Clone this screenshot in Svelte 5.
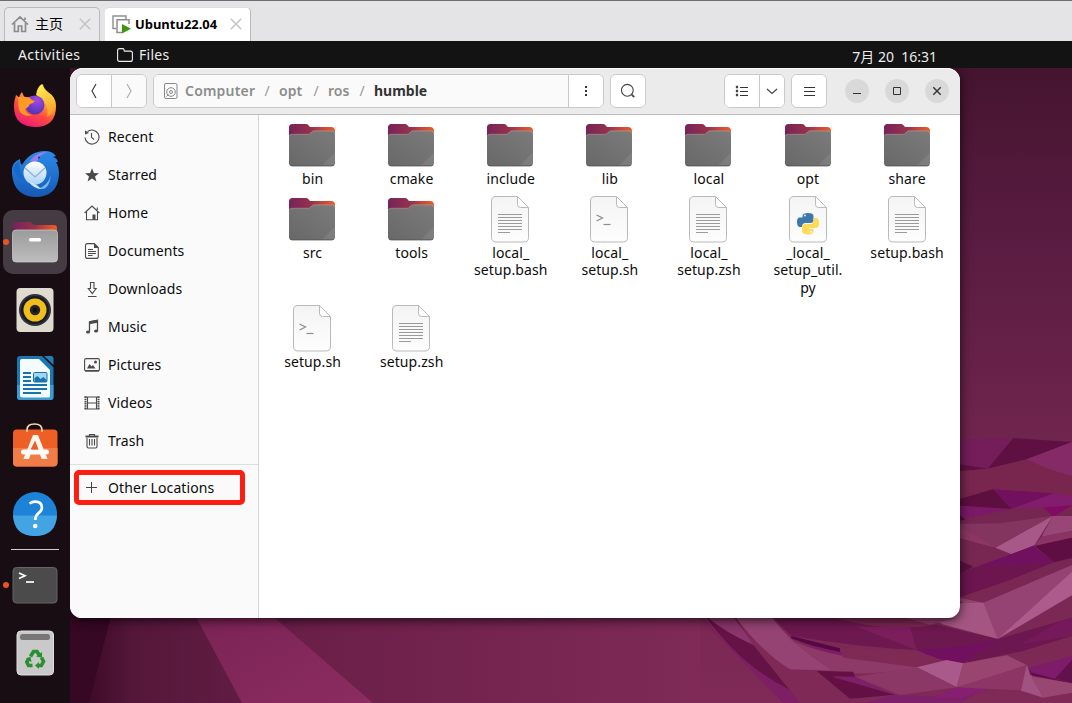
<script lang="ts">
  const places = ['Recent', 'Starred', 'Home', 'Documents', 'Downloads', 'Music', 'Pictures', 'Videos', 'Trash'];
  const files: { kind: string; lines: string[] }[] = [
    { kind: 'folder', lines: ['bin'] },
    { kind: 'folder', lines: ['cmake'] },
    { kind: 'folder', lines: ['include'] },
    { kind: 'folder', lines: ['lib'] },
    { kind: 'folder', lines: ['local'] },
    { kind: 'folder', lines: ['opt'] },
    { kind: 'folder', lines: ['share'] },
    { kind: 'folder', lines: ['src'] },
    { kind: 'folder', lines: ['tools'] },
    { kind: 'text', lines: ['local_', 'setup.bash'] },
    { kind: 'shell', lines: ['local_', 'setup.sh'] },
    { kind: 'text', lines: ['local_', 'setup.zsh'] },
    { kind: 'python', lines: ['_local_', 'setup_util.', 'py'] },
    { kind: 'text', lines: ['setup.bash'] },
    { kind: 'shell', lines: ['setup.sh'] },
    { kind: 'text', lines: ['setup.zsh'] },
  ];
</script>

<svg width="0" height="0" class="defs" aria-hidden="true">
  <defs>
    <linearGradient id="fback" x1="0" y1="0" x2="1" y2="0"><stop offset="0" stop-color="#76235a" /><stop offset=".5" stop-color="#98324a" /><stop offset=".75" stop-color="#c9483a" /><stop offset="1" stop-color="#ef5a26" /></linearGradient>
    <linearGradient id="ffront" x1="0" y1="1" x2="1" y2="0"><stop offset="0" stop-color="#686868" /><stop offset="1" stop-color="#7b7b7b" /></linearGradient>
    <linearGradient id="paper" x1="0" y1="0" x2="0" y2="1"><stop offset="0" stop-color="#f4f4f4" /><stop offset="1" stop-color="#fdfdfd" /></linearGradient>
    <linearGradient id="silver" x1="0" y1="0" x2="0" y2="1"><stop offset="0" stop-color="#9b9b9b" /><stop offset="1" stop-color="#bdbdbd" /></linearGradient>
    <linearGradient id="fox" x1=".8" y1="0" x2=".3" y2="1"><stop offset="0" stop-color="#fff04a" /><stop offset=".35" stop-color="#ffae2b" /><stop offset=".65" stop-color="#ff4b3e" /><stop offset="1" stop-color="#ec1a79" /></linearGradient>
    <linearGradient id="foxtail" x1=".3" y1="0" x2=".6" y2="1"><stop offset="0" stop-color="#fff250" /><stop offset="1" stop-color="#ff9a2d" /></linearGradient>
    <radialGradient id="globe" cx=".6" cy=".25" r=".8"><stop offset="0" stop-color="#a24be0" /><stop offset="1" stop-color="#4a32b8" /></radialGradient>
    <linearGradient id="bird" x1="0" y1="0" x2="0" y2="1"><stop offset="0" stop-color="#2c8bea" /><stop offset="1" stop-color="#1559b5" /></linearGradient>
    <linearGradient id="mail" x1="0" y1="0" x2="0" y2="1"><stop offset="0" stop-color="#fff" /><stop offset="1" stop-color="#a9d3f8" /></linearGradient>
  </defs>
</svg>

<div class="screen">
  <header class="tabs">
    <div class="tab idle">
      <svg width="18" height="18" viewBox="0 0 18 18" fill="none" stroke="#8b8b8b" stroke-width="1.7"><path d="M1 9.500 9 2l8 7.500M3.500 8v8.500h3.800V11h3.400v5.500h3.800V8M14 5V2.500" /></svg>
      <span class="home">主页</span>
      <svg class="x" width="12" height="12" viewBox="0 0 12 12" stroke="#c3c3c3" stroke-width="1.5"><path d="M.8.8l10.400 10.400M11.200.8.8 11.200" /></svg>
    </div>
    <div class="tab current">
      <svg width="20" height="19" viewBox="0 0 20 19"><path d="M4 13.500H1V1h13v3" fill="none" stroke="#8e8e8e" stroke-width="1.4" /><path d="M10 17.500H5V4.700h12V9" fill="none" stroke="#8e8e8e" stroke-width="1.5" /><path d="M10 9l9 4.700-9 4.800z" fill="#3f960e" /></svg>
      <b>Ubuntu22.04</b>
      <svg class="x" width="12" height="12" viewBox="0 0 12 12" stroke="#c3c3c3" stroke-width="1.5"><path d="M.8.8l10.400 10.400M11.200.8.8 11.200" /></svg>
    </div>
  </header>

  <div class="topbar">
    <span class="act">Activities</span>
    <svg width="16" height="14" viewBox="0 0 16 14" fill="none" stroke="#eee" stroke-width="1.1"><path d="M.6 11.500v-9Q.6.6 2.500.6h3.300q.9 0 1.200 1l.4 1.500h6q2 0 2 2v6.300q0 2-2 2H2.600q-2 0-2-1.900z" /></svg>
    <span class="app">Files</span>
    <span class="clock">7月 20&nbsp; 16:31</span>
  </div>

  <div class="desktop">
    <svg class="wall" width="1072" height="635" viewBox="0 68 1072 635">
      <defs>
        <linearGradient id="wv" x1="0" y1="0" x2="0" y2="1"><stop offset="0" stop-color="#45142f" /><stop offset=".28" stop-color="#5a1c42" /><stop offset=".6" stop-color="#71254e" /><stop offset="1" stop-color="#7f2a57" /></linearGradient>
        <linearGradient id="wh" x1="70" y1="0" x2="700" y2="0" gradientUnits="userSpaceOnUse"><stop offset="0" stop-color="#36061f" /><stop offset=".1" stop-color="#54173a" /><stop offset=".4" stop-color="#6c2049" /><stop offset="1" stop-color="#7f2a57" /></linearGradient>
        <linearGradient id="ray" x1="0" y1="0" x2="1" y2="1"><stop offset="0" stop-color="#792254" /><stop offset="1" stop-color="#8c2c61" /></linearGradient>
      </defs>
      <rect y="68" width="1072" height="635" fill="url(#wv)" />
      <rect y="600" width="700" height="103" fill="url(#wh)" />
      <path d="M0 600H115L89 703H0z" fill="#370823" />
      <path d="M187 600h67L373 703H242z" fill="url(#ray)" />
      <g transform="translate(700 400) scale(.33333)">
        <path d="M700 120 940 114 863 206 700 190z" fill="#741d5a" />
        <path d="M940 114 1116 126 980 178 863 206z" fill="#5f1043" />
        <path d="M700 180 863 206 700 222z" fill="#5d1142" />
        <path d="M863 206 980 178 1116 229V288L880 268 780 292V213z" fill="#79264f" />
        <path d="M980 178 1116 126V229L1040 205z" fill="#862a67" />
        <path d="M700 320 880 268 934 327 700 316z" fill="#5d0f40" />
        <path d="M880 268 1062 280 934 327z" fill="#70105f" />
        <path d="M934 327 1062 280 1116 288V318L1030 322z" fill="#811d6c" />
        <path d="M1030 322 1116 316 1060 350z" fill="#810b64" />
        <path d="M760 316 934 327 790 358z" fill="#7c1967" />
        <path d="M770 340 796 358 770 365z" fill="#5a0c42" />
        <path d="M770 372 900 370 1058 348 886 443 820 425z" fill="#83355f" />
        <path d="M770 372 886 443 770 412z" fill="#8c3663" />
        <path d="M1058 348 1004 435 935 463 886 443z" fill="#a85888" />
        <path d="M1058 348H1116V393L1025 410z" fill="#974676" />
        <path d="M1025 410 1116 393V413L1004 438z" fill="#8a3365" />
        <path d="M1004 438 1116 413V474L1062 487z" fill="#5f0e44" />
        <path d="M830 500 1000 438 1062 487z" fill="#70105f" />
        <path d="M770 520 830 500 1062 487 930 540 770 595z" fill="#6c154e" />
        <path d="M770 478 820 500 770 525z" fill="#5b1140" />
        <path d="M770 592 850 608 1116 495V520L893 717z" fill="#954372" />
        <path d="M680 660 770 610 850 608 893 717z" fill="#a55582" />
        <path d="M893 717 1116 515V586z" fill="#ad5b8d" />
        <path d="M10 640H100L300 909H360Q100 780 10 640z" fill="#681248" />
        <path d="M0 654 250 909H360Q120 790 10 654z" fill="#7e1e64" />
        <path d="M20 650Q140 830 360 909Q270 850 160 735z" fill="#651247" />
        <path d="M20 650H100L165 737Q80 700 20 650z" fill="#8a356b" />
        <path d="M105 650 160 735 300 909H455L352 813 270 808Q190 760 105 650z" fill="#7e2956" />
        <path d="M105 650H215Q270 730 400 812L270 808Q190 760 105 650z" fill="#954372" />
        <path d="M215 650H400Q560 700 690 670L893 717Q740 760 640 750Q470 740 274 708z" fill="#6d184f" />
        <path d="M390 650H640L730 672Q560 700 390 650z" fill="#7b2752" />
        <path d="M620 654H770L690 674z" fill="#913c69" />
        <path d="M470 680 630 680 650 750z" fill="#7c1d5c" />
        <path d="M274 708 420 745 430 773Q340 750 274 708z" fill="#7d1c68" />
        <path d="M274 708 420 745V756Q330 738 274 715z" fill="#560841" />
        <path d="M260 712Q350 766 560 785L660 802Q500 832 395 813z" fill="#8d3a68" />
        <path d="M420 745 650 750 740 780 650 802 430 773z" fill="#7f2955" />
        <path d="M650 750Q800 743 893 717L790 790Q720 785 650 750z" fill="#71105f" />
        <path d="M790 790 893 717 1116 653V708L960 755z" fill="#6d1751" />
        <path d="M963 733 1080 664 1116 653V708z" fill="#76195b" />
        <path d="M650 802 740 780 790 790 770 862z" fill="#a9598a" />
        <path d="M790 790 920 766 980 795 880 830 770 862z" fill="#98466f" />
        <path d="M465 830 650 802 770 862 600 885z" fill="#8c3866" />
        <path d="M770 862 980 795 965 871z" fill="#8d3666" />
        <path d="M980 795 1030 893 963 872z" fill="#a25280" />
        <path d="M992 829 1116 850 1116 878 1030 893z" fill="#984773" />
        <path d="M985 803 1116 769V848L990 825z" fill="#7f1b6b" />
        <path d="M1066 835 1116 780V850z" fill="#63114a" />
        <path d="M985 803 995 818 1110 848 995 826z" fill="#5b0c45" />
        <path d="M350 813 460 815 465 831 400 829 585 884 450 896z" fill="#631044" />
        <path d="M395 830H465L585 884 600 885 700 890 850 868 780 909H490L585 884z" fill="#7e1f69" />
        <path d="M700 892 770 862 865 870 780 895z" fill="#861f72" />
      </g>
    </svg>

    <nav class="dock">
      <div class="slot up"><svg width="48" height="48" viewBox="0 0 48 48">
        <path d="M5 14q1 0 3 3 1-4 3-6 1 4 4 6 7-3 12-1 0-8 5-13 0 4 5 8 8 5 8 14 0 21-21 21Q3 45 3 26q0-7 2-12z" fill="url(#fox)" />
        <path d="M25 14q1-8 6-11 1 5 5 9 7 6 7 14-1 8-7 10Q39 22 25 14z" fill="url(#foxtail)" />
        <circle cx="24" cy="24" r="9.5" fill="url(#globe)" />
        <path d="M7 16q7-1 12 1 2 3 5 3-2 3-5 3-1 3-5 5 2 6 8 6-10 3-14-5-1-6-1-13z" fill="#ff9a26" />
      </svg></div>
      <div class="slot"><svg width="50" height="50" viewBox="0 0 50 50">
        <path d="M2 19q1-6 8-9 0 4 2 6Q20 2 35 2q7 0 11 5l-3 1q4 1 5 5h-2q3 5 3 12Q48 48 25 48 4 47 2 25z" fill="url(#bird)" />
        <path d="M3 20q1-5 6-8 0 12 7 20-9-2-13-12z" fill="#1769cb" />
        <path d="M20 12Q26 3 37 3q-8 3-10 9-3 2-7 0z" fill="#9c7ee9" />
        <circle cx="29" cy="8.500" r="1" fill="#123a7a" />
        <path d="M27 40q11-3 14-14-2 14-9 14z" fill="#74b5f4" />
        <circle cx="25" cy="24" r="11.5" fill="url(#mail)" />
        <path d="M15 19l10 9 10-9" fill="none" stroke="#8fb3d4" stroke-width="1.300" />
        <path d="M19 33q7 1 12 7-8-1-12-7z" fill="#cce5fb" />
      </svg></div>
      <div class="slot active"><i class="dot"></i><svg width="48" height="48" viewBox="0 0 48 48">
        <path d="M2 20V7q0-3 3-3h13q2 0 3 1l2 2h20q3 0 3 3v10z" fill="url(#fback)" />
        <rect x="1.5" y="12" width="45" height="32" rx="3.5" fill="url(#silver)" stroke="#cfcfcf" stroke-width=".7" />
        <rect x="18" y="20" width="12" height="3.5" rx="1.500" fill="#fff" />
      </svg></div>
      <div class="slot"><svg width="48" height="48" viewBox="0 0 48 48">
        <rect x="5.5" y="2" width="37" height="44" rx="4" fill="#dfdbcf" />
        <circle cx="24" cy="24" r="16" fill="#30343c" /><circle cx="24" cy="24" r="14" fill="#191b20" /><circle cx="24" cy="24" r="11.5" fill="#f1bd1e" /><circle cx="24" cy="24" r="5.2" fill="#24262b" /><circle cx="24" cy="24" r="2.5" fill="#111" />
      </svg></div>
      <div class="slot"><svg width="48" height="48" viewBox="0 0 48 48">
        <path d="M6 5q0-3 3-3h22l11.500 11.500V43q0 3-3 3H9q-3 0-3-3z" fill="#1978b3" /><path d="M6 31h36.500v12q0 3-3 3H9q-3 0-3-3z" fill="#3a9bd3" />
        <path d="M33 2h7q2.500 0 2.500 2.500V11z" fill="#1f7fb9" />
        <path d="M9 7q0-2 2-2h17l11 11v26q0 1.500-2 1.500H11q-2 0-2-2z" fill="#f5fafc" />
        <g fill="#1673ae"><rect x="12" y="18" width="8" height="2" /><rect x="12" y="22" width="8" height="2" /><rect x="12" y="26" width="8" height="2" /><rect x="12" y="30" width="24" height="2" /><rect x="12" y="34" width="24" height="2" /><rect x="12" y="38" width="18" height="2" /></g>
        <rect x="22.500" y="18.5" width="13.500" height="9.5" rx="1" fill="#a2d7f3" stroke="#1673ae" /><path d="M23.500 28v-4l3-2 3 3 3-2 3 3v2z" fill="#1673ae" />
      </svg></div>
      <div class="slot up"><svg width="48" height="48" viewBox="0 0 48 48">
        <rect x="2" y="8.500" width="44.5" height="37" rx="4" fill="#ee5f25" /><path d="M2 27h44.500v14.500q0 4-4 4H6q-4 0-4-4z" fill="#f27c48" />
        <path d="M16 11V9q0-6 7.500-6T31 9v2" fill="none" stroke="#f7dcab" stroke-width="1.7" />
        <path d="M22 14h5l9.500 24h-5.800L24 20l-6 18h-5.600z" fill="#fff5ee" /><rect x="10" y="28.5" width="28" height="5" rx="2.5" fill="#fff" /><path d="M24 20l-4.500 8.500h8z" fill="#e95e28" />
      </svg></div>
      <div class="slot"><svg width="48" height="48" viewBox="0 0 48 48">
        <circle cx="24" cy="24" r="22" fill="#1d83d6" /><path d="M2 25.500h44Q45 46 24 46 3 46 2 25.500z" fill="#43a4e3" />
        <path d="M18.500 13.500q2.500-1.800 5.700-1.800 6.700 0 6.700 6 0 3-3.600 5.600-3 2.200-3 6.700" fill="none" stroke="#fff" stroke-width="2.7" /><circle cx="24.2" cy="36" r="2.3" fill="#fff" />
      </svg></div>
      <hr />
      <div class="slot up"><i class="dot"></i><svg width="48" height="48" viewBox="0 0 48 48">
        <rect x="2" y="6.5" width="44" height="35.5" rx="3.5" fill="#4b4b4b" stroke="#656565" /><path d="M8 12l6 2.800L8 17.500" fill="none" stroke="#fff" stroke-width="1.7" /><path d="M15 21h8" stroke="#fff" stroke-width="1.7" />
      </svg></div>
      <div class="slot up"><svg width="48" height="48" viewBox="0 0 48 48">
        <rect x="6" y="2" width="36.5" height="44" rx="4" fill="#c9c9c9" stroke="#dedede" /><rect x="9" y="5" width="30" height="6" rx="2.5" fill="#777" />
        <g fill="none" stroke="#29902f" stroke-width="3.6"><path d="M19.500 27.500l3-5h3.500l2.500 4" /><path d="M30.500 28.500l2 4-2.200 4H27" /><path d="M21.500 36.500h-4l-1.700-3.500 2.200-3.700" /></g>
        <g fill="#29902f"><path d="M25 27.500l6 1.200L31 23z" /><path d="M28 33l-4 3.500 4 3.500z" /><path d="M14.500 30l5-2.500 1 5.500z" /></g>
      </svg></div>
    </nav>

    <section class="window">
      <div class="headerbar">
        <div class="group nav">
          <button aria-label="Back"><svg width="8" height="16" viewBox="0 0 8 16" fill="none" stroke="#333" stroke-width="1.1"><path d="M6 1 2 8l4 7" /></svg></button>
          <button class="off" aria-label="Forward"><svg width="8" height="16" viewBox="0 0 8 16" fill="none" stroke="#aaa" stroke-width="1.1"><path d="M2 1l4 7-4 7" /></svg></button>
        </div>
        <div class="group path">
          <div class="crumbs">
            <svg width="14" height="16" viewBox="0 0 14 16" fill="none" stroke="#888"><rect x=".5" y=".5" width="12.5" height="15" rx="1.5" /><circle cx="7" cy="9" r="4.3" /><circle cx="7" cy="9" r="1.5" /><path d="M2.500 13.500l2-2" /></svg>
            <span class="c1">Computer</span><i>/</i><span class="c2">opt</span><i>/</i><span class="c3">ros</span><i>/</i><strong>humble</strong>
          </div>
          <button aria-label="Menu"><svg width="4" height="12" viewBox="0 0 4 12" fill="#333"><path d="M1 1h2v2H1zM1 5h2v2H1zM1 9h2v2H1z" /></svg></button>
        </div>
        <div class="group single"><button aria-label="Search"><svg width="16" height="16" viewBox="0 0 16 16" fill="none" stroke="#444" stroke-width="1.1"><circle cx="7.3" cy="7.3" r="5.9" /><path d="M11.700 11.700l2.500 2.500" stroke-width="1.8" /></svg></button></div>
        <div class="group view">
          <button aria-label="List"><svg width="14" height="12" viewBox="0 0 14 12" fill="none" stroke="#444"><path d="M5 2.500h8M5 6.500h8M5 10.500h8" stroke="#333" /><path d="M1.500 1.500h1v1h-1zM1.500 5.500h1v1h-1zM1.500 9.500h1v1h-1z" stroke-width="1.3" /></svg></button>
          <button class="chev" aria-label="Options"><svg width="12" height="7" viewBox="0 0 12 7" fill="none" stroke="#444" stroke-width="1.1"><path d="M1 1l5 4.500L11 1" /></svg></button>
        </div>
        <div class="group single"><button aria-label="Main menu"><svg width="11" height="11" viewBox="0 0 11 11" stroke="#333"><path d="M0 1.500h11M0 5.500h11M0 9.500h11" /></svg></button></div>
        <div class="controls">
          <span><svg width="10" height="10" viewBox="0 0 10 10" stroke="#333"><path d="M1 7.500h8" /></svg></span>
          <span><svg width="10" height="10" viewBox="0 0 10 10" stroke="#333" fill="none"><path d="M1.500 1.500h7v7h-7z" /></svg></span>
          <span><svg width="10" height="10" viewBox="0 0 10 10" stroke="#333" stroke-width="1.4"><path d="M1.300 1.300l7.400 7.400M8.700 1.300 1.300 8.700" /></svg></span>
        </div>
      </div>

      <div class="body">
        <aside>
          {#each places as name}
            <div class="place">
              <svg width="16" height="16" viewBox="0 0 16 16" fill="none" stroke="#4a4a4a" stroke-width="1.1">
                {#if name === 'Recent'}
                  <path d="M3.500 2.700A7 7 0 1 1 1 8.500" /><path d="M1 5.500V1.500L5 4z" fill="#4a4a4a" stroke="none" /><path d="M7.500 4v4.300L10 10.500" />
                {:else if name === 'Starred'}
                  <path d="M8 1.200l1.900 4.900 5 .2-3.900 3.200 1.400 4.900L8 11.600l-4.400 2.800L5 9.500 1.100 6.300l5-.2z" fill="#4a4a4a" stroke="none" />
                {:else if name === 'Home'}
                  <path d="M.6 8 8 1l7.400 7M2.500 6.500v8.300h11V6.500M13.300 5V2.500" /><path d="M8.500 9.500h3v5.300h-3z" fill="#4a4a4a" stroke="none" />
                {:else if name === 'Documents'}
                  <path d="M3.500.6h6.800l4 4v8.800q0 2-2 2H3.500q-2 0-2-2V2.600q0-2 2-2z" /><path d="M10 .5V5h4.500z" fill="#4a4a4a" stroke="none" /><path d="M4 6.500h5M4 8.500h8M4 10.500h8M4 12.500h4.500" />
                {:else if name === 'Downloads'}
                  <path d="M6.500 1.500h3.500v6h2.200L8.250 12.700 4.300 7.500h2.200zM4 15.500h8.500" />
                {:else if name === 'Music'}
                  <path d="M5.500 12.500V2.800l8-1.500V12" stroke-width="1.3" /><path d="M5.500 2.300l8-1.500v3l-8 1.500z" fill="#4a4a4a" stroke="none" /><ellipse cx="4" cy="13" rx="2" ry="1.6" fill="#4a4a4a" stroke="none" /><ellipse cx="12" cy="12" rx="2" ry="1.6" fill="#4a4a4a" stroke="none" />
                {:else if name === 'Pictures'}
                  <rect x=".6" y="1.6" width="14.8" height="12.3" rx="1.5" /><path d="M1 13h14v1.500H1z" fill="#4a4a4a" stroke="none" /><path d="M3 11.500l2.500-4.500 2 2.500L9 8l2.500 3.500z" fill="#4a4a4a" stroke="none" /><circle cx="11.5" cy="5" r="1.5" fill="#4a4a4a" stroke="none" />
                {:else if name === 'Videos'}
                  <path d="M1.500 1.500v13M14.500 1.500v13" stroke-width="2" stroke-dasharray="1.500 .7" /><path d="M.5 2h15M.5 14h15M3.500 2v12M12.500 2v12M3.500 8h9" />
                {:else}
                  <path d="M1.500 3.500h13" stroke-width="2" /><path d="M5.500 3V1.500h5V3M3 5v8.500q0 1.500 1.500 1.500h7q1.500 0 1.500-1.500V5M5.500 6v6.500M8 6v6.500M10.500 6v6.500" />
                {/if}
              </svg>
              <span>{name}</span>
            </div>
          {/each}
          <div class="other">
            <svg width="16" height="16" viewBox="0 0 16 16" stroke="#444"><path d="M2 7.500h11M7.500 2v11" /></svg>
            <span>Other Locations</span>
          </div>
        </aside>
        <main>
          {#each files as f}
            <div class="file">
              <svg width="48" height="48" viewBox="0 0 48 48">
                {#if f.kind === 'folder'}
                  <path d="M1 20V5.500Q1 2 4.500 2H18q1.500 0 2.500 1.200L22 5h21q4 0 4 4v11z" fill="url(#fback)" />
                  <path d="M1 15q0-2.500 3-2.500h16q1.500 0 2.500-1.200l1-1.200Q24.400 9 26 9h18q3 0 3 3v29q0 3-3 3H4q-3 0-3-3z" fill="url(#ffront)" />
                  <path d="M1.200 14q.5-1.700 3-1.700h16q1.500 0 2.500-1.200l1-1.200q.9-1 2.500-1H44q2.500 0 2.800 2.500" fill="none" stroke="#aaa" stroke-width=".6" />
                  <path d="M34 43.500 47 30.500V41q0 2.500-3 2.500z" fill="#fff" opacity=".08" /><path d="M2 43q1 1 2.500 1h39q1.500 0 2.500-1" fill="none" stroke="#484848" stroke-width=".7" />
                {:else}
                  <path d="M10 .5h21.500l11 11V41.500q0 4.500-4.500 4.500H10q-4.500 0-4.500-4.500V5Q5.500.5 10 .5zM31.500.5V8.500q0 3 3 3h8" fill="url(#paper)" stroke="#b9b9b9" />
                  {#if f.kind === 'text'}
                    <path d="M12 18.500h24M12 21.500h24M12 24.500h24M12 27.500h24M12 30.500h24M12 33.500h24M12 36.500h12" stroke="#9a9a9a" />
                  {:else if f.kind === 'shell'}
                    <path d="M11.500 19l6 3-6 3" fill="none" stroke="#8e8e8e" stroke-width="1.3" /><path d="M18.500 28.500h7" stroke="#8e8e8e" stroke-width="1.2" />
                  {:else}
                    <path d="M18.500 22v-2q0-3 5.500-3t5.500 3v4q0 3-3 3h-5q-3.500 0-3.500 4h-2q-3 0-3-5t3-4.500h7.500V22z" fill="#3c78ab" /><circle cx="21" cy="19.5" r=".9" fill="#fff" />
                    <path d="M29.500 22H32q3 0 3 5t-3 5h-7v1h4.500v2.500q0 3-5.500 3t-6-3V31q0-3 3-3h5q3.500 0 3.500-3z" fill="#ffda59" /><circle cx="27" cy="35.8" r=".9" fill="#fff" />
                  {/if}
                {/if}
              </svg>
              <div class="label">{#each f.lines as line}<span>{line}</span>{/each}</div>
            </div>
          {/each}
        </main>
      </div>
      <div class="highlight"></div>
    </section>
  </div>
</div>

<style>
  :global(body) { background: #131313; }
  .defs { position: absolute; }
  .screen { width: 1072px; height: 703px; overflow: hidden; display: flex; flex-direction: column; font-family: "Noto Sans", "Noto Sans CJK SC", sans-serif; font-size: 14px; color: #0c0c0c; }
  svg { display: block; flex: none; }
  .tabs { box-sizing: border-box; height: 41px; border-top: 1px solid #6d6d71; background: #e4e4e6; display: flex; align-items: flex-end; gap: 5px; padding-left: 4px; }
  .tab { box-sizing: border-box; height: 34px; border: 1px solid #b9b9bb; border-bottom: 0; border-radius: 5px 5px 0 0; display: flex; align-items: center; padding-bottom: 1px; }
  .idle { width: 96px; padding-left: 6px; background: #e9e9eb; }
  .current { width: 146px; padding-left: 6px; background: #fff; border-left-color: #fff; border-top-color: #ddd; }
  .home { font: 14px "Noto Sans CJK SC", sans-serif; color: #000; width: 44px; margin-left: 6px; line-height: 20px; padding-bottom: 3px; }
  .tab b { font: bold 12.900px "Open Sans", sans-serif; color: #000; width: 95px; margin-left: 3px; white-space: nowrap; }
  .topbar { height: 27px; background: #131313; color: #ececec; display: flex; align-items: center; }
  .act { width: 63px; margin-left: 18px; margin-right: 36px; letter-spacing: .4px; }
  .app { margin-left: 6px; letter-spacing: .25px; }
  .clock { margin-left: auto; margin-right: 135px; padding-top: 3px; white-space: nowrap; font-size: 14px; }
  .desktop { height: 635px; display: flex; position: relative; }
  .wall { position: absolute; left: 0; top: 0; }
  .dock { width: 70px; height: 635px; box-sizing: border-box; background: #190d14; display: flex; flex-direction: column; align-items: center; gap: 4px; padding-top: 6px; position: relative; }
  .slot { box-sizing: border-box; width: 64px; height: 64px; border-radius: 10px; display: flex; align-items: center; justify-content: center; position: relative; }
  .up { padding-bottom: 2px; }
  .active { background: #443c42; }
  .dot { position: absolute; left: 0; top: 29px; width: 6px; height: 6px; border-radius: 50%; background: #e95420; }
  .up .dot { top: 28px; }
  hr { width: 48px; height: 1px; border: 0; background: #d2d0d1; margin: -1px 0 0; flex: none; }
  .window { width: 890px; height: 550px; border-radius: 13px 13px 12px 12px; position: relative; box-shadow: 0 3px 9px rgba(0,0,0,.45), 0 0 14px rgba(0,0,0,.35); display: flex; flex-direction: column; background: #fff; clip-path: inset(0 -30px -30px 0); }
  .headerbar { height: 47px; box-sizing: border-box; background: #ebebeb; border-top: 1px solid #fafafa; border-bottom: 1px solid #bdbdbd; border-radius: 13px 13px 0 0; display: flex; align-items: center; padding: 0 11px 1px 6px; }
  .group { box-sizing: border-box; height: 34px; border: 1px solid #cacaca; border-radius: 6px; background: #fff; display: flex; overflow: hidden; }
  button { appearance: none; border: 0; background: #fff; padding: 0; flex: 1; display: flex; align-items: center; justify-content: center; }
  button + button, .crumbs + button { border-left: 1px solid #cacaca; }
  .off { background: #fafafa; }
  .nav { width: 71px; margin-right: 6px; }
  .path { width: 451px; margin-right: 6px; }
  .crumbs { width: 414px; background: #fafafa; display: flex; align-items: center; padding-left: 10px; box-sizing: border-box; font-weight: 600; font-size: 14px; color: #8c8c8c; }
  .crumbs span, .crumbs i, .crumbs strong { white-space: nowrap; padding-bottom: 1px; }
  .c1 { width: 70px; margin-left: 7px; letter-spacing: .2px; }
  .c2 { width: 25px; }
  .c3 { width: 22px; }
  .crumbs i { width: 24px; text-align: center; font-style: normal; font-weight: 400; color: #999; }
  .crumbs strong { color: #333; font-weight: 700; }
  .single { width: 36px; }
  .view { width: 61px; margin-left: 78px; margin-right: 6px; }
  .view button:first-child { padding-right: 1px; }
  .view .chev { flex: none; width: 25px; }
  .controls { margin-left: auto; display: flex; gap: 16px; }
  .controls span { width: 24px; height: 24px; border-radius: 50%; background: #d9d9d9; display: flex; align-items: center; justify-content: center; }
  .body { height: 503px; display: flex; }
  aside { width: 189px; box-sizing: border-box; border-right: 1px solid #d5d5d5; background: #fafafa; padding-top: 3px; border-bottom-left-radius: 12px; }
  .place, .other { height: 38px; padding-left: 14px; display: flex; align-items: center; gap: 8px; }
  .other { border-top: 1px solid #dedede; margin-top: 4px; height: 46px; }
  .place span, .other span { white-space: nowrap; padding-bottom: 2px; letter-spacing: .1px; }
  main { box-sizing: border-box; width: 701px; padding: 7px 4px 0 3.500px; display: grid; grid-template-columns: repeat(7, 99.100px); align-content: start; row-gap: 8.670px; }
  .file { display: flex; flex-direction: column; align-items: center; }
  .label { display: flex; flex-direction: column; align-items: center; line-height: 17.333px; letter-spacing: .1px; padding-left: 1px; }
  .highlight { position: absolute; left: 4px; top: 402px; width: 171px; height: 35px; box-sizing: border-box; border: 5px solid #fd1d12; border-radius: 5px; }
</style>
